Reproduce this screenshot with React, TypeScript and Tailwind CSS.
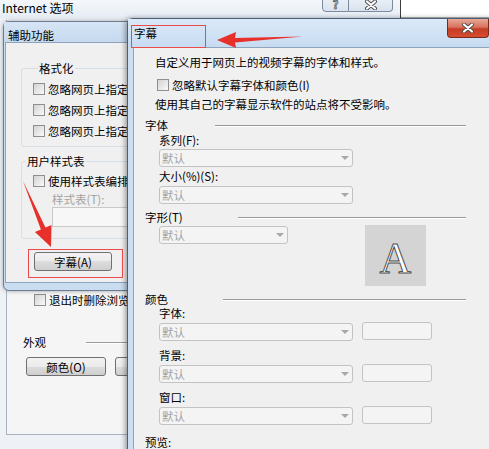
import React from 'react'

function Checkbox() {
  return (
    <span className="inline-block w-[12px] h-[12px] shrink-0 border border-[#8e8f8f] bg-linear-to-br from-[#d4d4d4] to-[#f9f9f9]" />
  )
}

function Combo({ className = '' }: { className?: string }) {
  return (
    <div
      className={`flex items-center justify-between h-[18px] rounded-[3px] border border-[#c3c3c3] bg-[#f4f4f4] pl-[2px] pr-[3px] text-[#a3a3a3] ${className}`}
    >
      <span>默认</span>
      <span className="w-0 h-0 border-l-[4px] border-r-[4px] border-t-[4px] border-l-transparent border-r-transparent border-t-[#a8a8a8]" />
    </div>
  )
}

function Swatch() {
  return <div className="ml-[9px] w-[70px] h-[18px] rounded-[3px] border border-[#c3c3c3] bg-[#f4f4f4]" />
}

function Btn({ children, className = '' }: { children?: React.ReactNode; className?: string }) {
  return (
    <div
      className={`flex items-center justify-center h-[19px] rounded-[3px] border border-[#707070] bg-[linear-gradient(#f3f3f3_0%,#ebebeb_50%,#dddddd_50%,#cfcfcf_100%)] ${className}`}
    >
      {children}
    </div>
  )
}

function XGlyph() {
  return (
    <svg width="14" height="10" viewBox="0 0 14 10">
      <path d="M3 1.5 L11 8.5 M11 1.5 L3 8.5" stroke="#4a4a4a" strokeWidth="4" strokeLinecap="round" />
      <path d="M3 1.5 L11 8.5 M11 1.5 L3 8.5" stroke="#ffffff" strokeWidth="2.2" strokeLinecap="round" />
    </svg>
  )
}

// etched separator line
function Rule() {
  return (
    <div className="flex-1 flex flex-col mt-[2px]">
      <div className="h-px bg-[#999999]" />
      <div className="h-px bg-white" />
    </div>
  )
}

function InternetOptions() {
  return (
    <div className="absolute left-0 top-0 w-[401px] h-full flex flex-col border-r border-[#3c3c3c] bg-[#eef2f6]">
      {/* title bar */}
      <div className="flex items-start h-[18px] bg-linear-to-b from-[#f4f7fa] to-[#e6edf5]">
        <span className="pl-[2px] pt-px text-[12px] leading-[14px]">Internet 选项</span>
        <div className="ml-auto mr-[7px] -mt-[6px] flex">
          <div className="w-[27px] h-[18px] flex items-end justify-center pb-[1px] rounded-bl-[4px] border border-[#7b8a9d] bg-linear-to-b from-[#eef3f8] to-[#d9e3ee] text-[11px] font-bold leading-[11px] text-white [-webkit-text-stroke:0.8px_#555]">
            ?
          </div>
          <div className="w-[44px] h-[18px] flex items-end justify-center pb-[1px] rounded-br-[4px] border border-l-0 border-[#7b8a9d] bg-linear-to-b from-[#eef3f8] to-[#d9e3ee]">
            <XGlyph />
          </div>
        </div>
      </div>
      {/* tab page */}
      <div className="ml-[6px] mt-[2px] h-[415px] border-l border-b border-[#a9b3bf] bg-[#f5f5f5] pt-[273px]">
        <div className="flex items-center gap-[3px] pl-[27px] h-[14px]">
          <Checkbox />
          <span className="whitespace-nowrap">退出时删除浏览历史记录(W)</span>
        </div>
        <div className="flex items-center mt-[28px] pl-[16px] h-[14px]">
          <span className="shrink-0 w-[63px]">外观</span>
          <Rule />
        </div>
        <div className="flex mt-[8px]">
          <Btn className="ml-[19px] w-[80px]">颜色(O)</Btn>
          <Btn className="ml-[9px] w-[80px]">语言(L)</Btn>
        </div>
      </div>
    </div>
  )
}

function Accessibility() {
  return (
    <div className="absolute left-[3px] top-[21px] w-[140px] h-[270px] flex flex-col rounded-[6px] border border-[#6a7d94] bg-[#cadcf0] shadow-[0_0_4px_rgba(0,0,0,0.35)]">
      <div className="h-[20px] shrink-0 pl-[4px] pt-[6px] bg-linear-to-b from-[#d6e5f5] to-[#c5d9ef]">辅助功能</div>
      <div className="flex-1 mb-[7px] ml-[1px] border-l border-t border-b border-[#8ea4bd] bg-[#f0f0f0] flex flex-col">
        <fieldset className="ml-[15px] mt-[18px] w-[130px] rounded-[3px] border border-[#d5dfe5] pl-[11px] pb-[8px]">
          <legend className="ml-[5px] px-[1px] leading-[14px]">格式化</legend>
          {['忽略网页上指定的颜色(C)', '忽略网页上指定的字体样式(Y)', '忽略网页上指定的字体大小(Z)'].map((t) => (
            <div key={t} className="flex items-center gap-[3px] h-[14px] mt-[7px] whitespace-nowrap">
              <Checkbox />
              <span>{t}</span>
            </div>
          ))}
        </fieldset>
        <fieldset className="ml-[15px] mt-[7px] w-[130px] rounded-[3px] border border-[#d5dfe5] pb-[11px]">
          <legend className="ml-[4px] px-[1px] leading-[14px]">用户样式表</legend>
          <div className="flex items-center gap-[3px] h-[14px] mt-[6px] pl-[11px] whitespace-nowrap">
            <Checkbox />
            <span>使用样式表编排文档格式(D)</span>
          </div>
          <div className="mt-[4px] pl-[30px] h-[14px] text-[#a3a3a3] whitespace-nowrap">样式表(T):</div>
          <div className="ml-[30px] mt-[1px] w-[120px] h-[20px] border border-[#c8c8c8] bg-[#f7f7f7]" />
        </fieldset>
        <Btn className="ml-[28px] mt-[13px] w-[78px]">字幕(A)</Btn>
      </div>
    </div>
  )
}

function Subtitles() {
  return (
    <div className="absolute left-[127px] top-[18px] w-[370px] h-[440px] flex flex-col rounded-t-[6px] border border-[#4d5f75] bg-[#cbdef2] shadow-[-2px_0_5px_rgba(0,0,0,0.35)]">
      <div className="h-[28px] shrink-0 flex items-start justify-between bg-linear-to-b from-[#dbe9f8] to-[#c7dbf1]">
        <span className="pl-[6px] pt-[7px]">字幕</span>
        <div className="mr-[7px] w-[42px] h-[19px] flex items-center justify-center rounded-b-[4px] border border-t-0 border-[#7a2a1c] bg-[linear-gradient(#e9a797_0%,#d8735f_45%,#c43d25_55%,#d84d30_100%)]">
          <XGlyph />
        </div>
      </div>
      <div className="flex-1 ml-[5px] border-l border-t border-[#8ea4bd] bg-[#f0f0f0] flex flex-col pl-[11px]">
        <div className="mt-[7px] pl-[10px] h-[14px] whitespace-nowrap">自定义用于网页上的视频字幕的字体和样式。</div>
        <div className="mt-[9px] pl-[12px] h-[14px] flex items-center gap-[3px] whitespace-nowrap">
          <Checkbox />
          <span>忽略默认字幕字体和颜色(I)</span>
        </div>
        <div className="mt-[5px] pl-[10px] h-[14px] whitespace-nowrap">使用其自己的字幕显示软件的站点将不受影响。</div>

        <div className="flex items-center mt-[7px] w-[321px] h-[14px]">
          <span className="shrink-0 w-[70px]">字体</span>
          <Rule />
        </div>
        <div className="mt-[1px] pl-[14px] h-[14px]">系列(F):</div>
        <Combo className="mt-[2px] ml-[14px] w-[194px]" />
        <div className="mt-[2px] pl-[14px] h-[14px]">大小(%)(S):</div>
        <Combo className="mt-[3px] ml-[14px] w-[194px]" />

        <div className="flex items-center mt-[6px] w-[321px] h-[14px]">
          <span className="shrink-0 w-[93px]">字形(T)</span>
          <Rule />
        </div>
        <div className="mt-[1px] flex items-start">
          <Combo className="mt-[1px] ml-[14px] w-[129px]" />
          <div className="ml-[77px] w-[61px] h-[61px] bg-[#d4d4d4] flex items-center justify-center pt-[6px] text-[44px] leading-none text-white font-['Liberation_Serif',serif] [-webkit-text-stroke:1px_#505050]">
            A
          </div>
        </div>

        <div className="flex items-center mt-[6px] w-[321px] h-[14px]">
          <span className="shrink-0 w-[78px]">颜色</span>
          <Rule />
        </div>
        <div className="pl-[14px] h-[14px]">字体:</div>
        <div className="mt-[2px] flex items-start">
          <Combo className="mt-[1px] ml-[14px] w-[194px]" />
          <Swatch />
        </div>
        <div className="mt-[7px] pl-[14px] h-[14px]">背景:</div>
        <div className="mt-[2px] flex items-start">
          <Combo className="mt-[1px] ml-[14px] w-[194px]" />
          <Swatch />
        </div>
        <div className="mt-[7px] pl-[14px] h-[14px]">窗口:</div>
        <div className="mt-[2px] flex items-start">
          <Combo className="mt-[1px] ml-[14px] w-[194px]" />
          <Swatch />
        </div>
        <div className="mt-[10px] h-[14px]">预览:</div>
      </div>
    </div>
  )
}

export default function App() {
  return (
    <div className="relative w-[489px] h-[449px] overflow-hidden bg-[#f0f0f0] text-[11.5px] leading-[14px] text-black font-['Noto_Sans_CJK_SC','Noto_Sans',sans-serif]">
      {/* whatever sits behind the dialogs at top right */}
      <div className="absolute left-[401px] top-0 w-[88px] h-[18px] bg-white border-b border-[#b5b5b5]" />
      <InternetOptions />
      <Accessibility />
      <Subtitles />

      {/* red annotations */}
      <div className="absolute left-[131px] top-[25px] w-[75px] h-[23px] border border-[#e94b4b]" />
      <div className="absolute left-[28px] top-[249px] w-[95px] h-[29px] border border-[#e94b4b]" />
      <svg className="absolute inset-0 pointer-events-none" width="489" height="449" viewBox="0 0 489 449">
        <polygon points="23,181 45.5,227.6 51.5,225.1 51,247 34.9,232.1 40.9,229.6" fill="#e8302a" />
        <polygon points="217,40 236,32 235,38 303,36.5 235,42.5 236,48" fill="#e8302a" />
      </svg>
    </div>
  )
}
